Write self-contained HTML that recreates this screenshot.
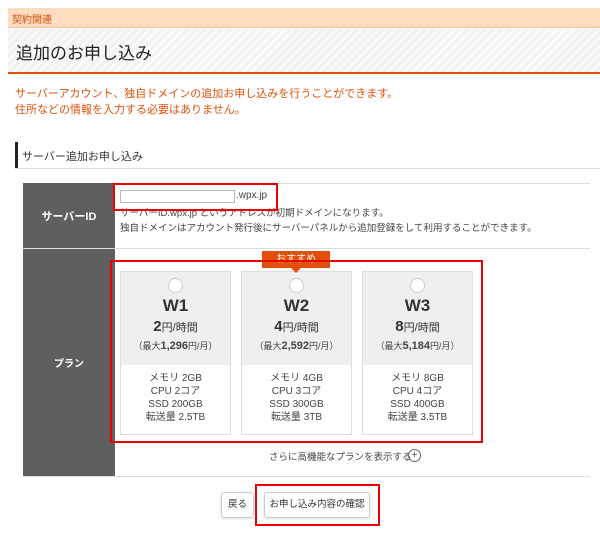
<!DOCTYPE html>
<html><head><meta charset="utf-8"><style>
*{margin:0;padding:0;box-sizing:border-box}
body{width:600px;height:546px;background:#fff;font-family:"Liberation Sans","Noto Sans CJK JP",sans-serif;position:relative;overflow:hidden;color:#333}
.a{position:absolute}
.card{position:absolute;top:271px;width:111px;height:164px;border:1px solid #ddd;background:#fff;text-align:center}
.card .top{background:#efefef;height:93px;position:relative;padding-top:6px}
.rad{width:15px;height:15px;border-radius:50%;background:#fff;border:1px solid #ccc;margin:0 auto}
.nm{font-size:17px;font-weight:bold;color:#333;margin-top:3px;line-height:20px}
.pr{font-size:11px;margin-top:3px;line-height:16px}
.pr b{font-size:15px;font-weight:bold}
.mx{font-size:9px;margin-top:3px;color:#444}
.mx b{font-size:11px}
.sp{font-size:10px;line-height:13px;padding-top:7px;color:#444}
</style></head><body>
<div class="a" style="left:8px;top:8px;width:592px;height:20px;background:#fddcc0;border-bottom:1px solid #f3c7a3;font-size:10px;color:#d0500a;padding:3px 0 0 4px">契約関連</div>
<div class="a" style="left:8px;top:29px;width:592px;height:43px;background:repeating-linear-gradient(135deg,#f2f2f2 0 3px,#fafafa 3px 6px);font-size:17px;color:#222;padding:10px 0 0 8px">追加のお申し込み</div>
<div class="a" style="left:8px;top:72px;width:592px;height:2px;background:#e0500a"></div>
<div class="a" style="left:15px;top:86px;font-size:11px;color:#e0500a;line-height:16px">サーバーアカウント、独自ドメインの追加お申し込みを行うことができます。<br>住所などの情報を入力する必要はありません。</div>
<div class="a" style="left:15px;top:142px;width:3px;height:26px;background:#222"></div>
<div class="a" style="left:22px;top:148px;font-size:11px;color:#333">サーバー追加お申し込み</div>
<div class="a" style="left:15px;top:168px;width:585px;height:1px;background:#ddd"></div>

<div class="a" style="left:23px;top:183px;width:567px;height:1px;background:#ddd"></div>
<div class="a" style="left:23px;top:183px;width:92px;height:293px;background:#5f5f5f"></div>
<div class="a" style="left:23px;top:248px;width:567px;height:1px;background:#ddd"></div>
<div class="a" style="left:23px;top:476px;width:567px;height:1px;background:#ddd"></div>
<div class="a" style="left:23px;top:208px;width:92px;text-align:center;color:#fff;font-size:11px;font-weight:bold">サーバーID</div>
<div class="a" style="left:23px;top:355px;width:92px;text-align:center;color:#fff;font-size:10px;font-weight:bold">プラン</div>

<div class="a" style="left:120px;top:190px;width:115px;height:13px;border:1px solid #bbb"></div>
<div class="a" style="left:236px;top:190px;font-size:10px;color:#444">.wpx.jp</div>
<div class="a" style="left:120px;top:206px;font-size:9.5px;color:#444;line-height:15px">サーバーID.wpx.jp というアドレスが初期ドメインになります。<br>独自ドメインはアカウント発行後にサーバーパネルから追加登録をして利用することができます。</div>
<div class="a" style="left:113px;top:183px;width:165px;height:28px;border:2px solid #e00"></div>

<div class="card" style="left:120px"><div class="top"><div class="rad"></div><div class="nm">W1</div><div class="pr"><b>2</b>円/時間</div><div class="mx">（最大<b>1,296</b>円/月）</div></div><div class="sp">メモリ 2GB<br>CPU 2コア<br>SSD 200GB<br>転送量 2.5TB</div></div>
<div class="card" style="left:241px"><div class="top"><div class="rad"></div><div class="nm">W2</div><div class="pr"><b>4</b>円/時間</div><div class="mx">（最大<b>2,592</b>円/月）</div></div><div class="sp">メモリ 4GB<br>CPU 3コア<br>SSD 300GB<br>転送量 3TB</div></div>
<div class="card" style="left:362px"><div class="top"><div class="rad"></div><div class="nm">W3</div><div class="pr"><b>8</b>円/時間</div><div class="mx">（最大<b>5,184</b>円/月）</div></div><div class="sp">メモリ 8GB<br>CPU 4コア<br>SSD 400GB<br>転送量 3.5TB</div></div>
<div class="a" style="left:262px;top:251px;width:68px;height:17px;background:#e0500a;color:#fff;font-size:10px;text-align:center;line-height:17px">おすすめ</div>
<div class="a" style="left:291px;top:268px;width:0;height:0;border-left:5px solid transparent;border-right:5px solid transparent;border-top:5px solid #e0500a"></div>
<div class="a" style="left:110px;top:260px;width:373px;height:183px;border:2px solid #e00"></div>

<div class="a" style="left:269px;top:449px;font-size:9.5px;color:#444">さらに高機能なプランを表示する</div>
<div class="a" style="left:408px;top:449px;width:13px;height:13px;border:1px solid #666;border-radius:50%;font-size:11px;line-height:11px;text-align:center;color:#555">+</div>

<div class="a" style="left:221px;top:492px;width:33px;height:26px;border:1px solid #ccc;border-radius:3px;font-size:9.5px;text-align:center;line-height:24px;box-shadow:0 1px 2px #ddd">戻る</div>
<div class="a" style="left:264px;top:492px;width:106px;height:26px;border:1px solid #ccc;border-radius:3px;font-size:9.5px;text-align:center;line-height:24px;box-shadow:0 1px 2px #ddd">お申し込み内容の確認</div>
<div class="a" style="left:255px;top:484px;width:125px;height:42px;border:2px solid #e00"></div>
</body></html>
